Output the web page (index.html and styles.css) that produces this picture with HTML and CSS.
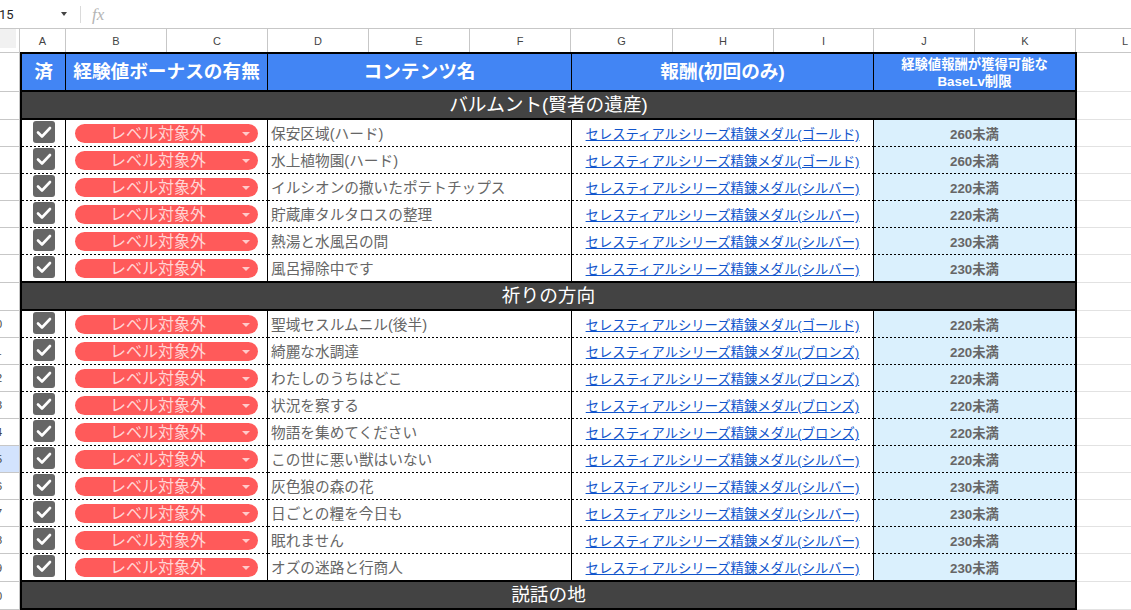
FILE: index.html
```html
<!DOCTYPE html>
<html lang="ja">
<head>
<meta charset="utf-8">
<title>Sheet</title>
<link rel="stylesheet" href="styles.css">
</head>
<body>
<div class="toolbar">
  <div class="namebox"><span class="nb-text">15</span><span class="nb-arrow"></span></div>
  <div class="sep"></div>
  <div class="fx">fx</div>
</div>
<div class="colhead">
  <div class="ch corner"><div class="corner-box"></div></div>
  <div class="ch w-a">A</div>
  <div class="ch w-101">B</div>
  <div class="ch w-101">C</div>
  <div class="ch w-101">D</div>
  <div class="ch w-101">E</div>
  <div class="ch w-101">F</div>
  <div class="ch w-102">G</div>
  <div class="ch w-101">H</div>
  <div class="ch w-100">I</div>
  <div class="ch w-101">J</div>
  <div class="ch w-101">K</div>
  <div class="ch ch-l">L</div>
</div>

<div class="row first r-head">
  <div class="rh"></div>
  <div class="t t-head">
    <div class="h ca">済</div>
    <div class="h cb">経験値ボーナスの有無</div>
    <div class="h cd">コンテンツ名</div>
    <div class="h cg">報酬(初回のみ)</div>
    <div class="h cj small">経験値報酬が獲得可能な<br>BaseLv制限</div>
  </div>
  <div class="l"></div>
</div>

<div class="row r-sec">
  <div class="rh"></div>
  <div class="t t-sec">バルムント(賢者の遺産)</div>
  <div class="l"></div>
</div>

<div class="row r-data">
  <div class="rh"></div>
  <div class="t t-data">
    <div class="c ca"><svg class="cbx" width="22" height="22" viewBox="0 0 22 22"><rect x="0" y="0" width="22" height="22" rx="3" fill="#666"/><path d="M5 11.5 L9 15.5 L17 7" fill="none" stroke="#fff" stroke-width="2.6" stroke-linecap="round" stroke-linejoin="round"/></svg></div>
    <div class="c cb"><div class="chip"><span class="chip-t">レベル対象外</span><span class="chip-a"></span></div></div>
    <div class="c cd">保安区域(ハード)</div>
    <div class="c cg"><a href="#">セレスティアルシリーズ精錬メダル(ゴールド)</a></div>
    <div class="c cj">260未満</div>
  </div>
  <div class="l"></div>
</div>
<div class="row r-data">
  <div class="rh"></div>
  <div class="t t-data">
    <div class="c ca"><svg class="cbx" width="22" height="22" viewBox="0 0 22 22"><rect x="0" y="0" width="22" height="22" rx="3" fill="#666"/><path d="M5 11.5 L9 15.5 L17 7" fill="none" stroke="#fff" stroke-width="2.6" stroke-linecap="round" stroke-linejoin="round"/></svg></div>
    <div class="c cb"><div class="chip"><span class="chip-t">レベル対象外</span><span class="chip-a"></span></div></div>
    <div class="c cd">水上植物園(ハード)</div>
    <div class="c cg"><a href="#">セレスティアルシリーズ精錬メダル(ゴールド)</a></div>
    <div class="c cj">260未満</div>
  </div>
  <div class="l"></div>
</div>
<div class="row r-data">
  <div class="rh"></div>
  <div class="t t-data">
    <div class="c ca"><svg class="cbx" width="22" height="22" viewBox="0 0 22 22"><rect x="0" y="0" width="22" height="22" rx="3" fill="#666"/><path d="M5 11.5 L9 15.5 L17 7" fill="none" stroke="#fff" stroke-width="2.6" stroke-linecap="round" stroke-linejoin="round"/></svg></div>
    <div class="c cb"><div class="chip"><span class="chip-t">レベル対象外</span><span class="chip-a"></span></div></div>
    <div class="c cd">イルシオンの撒いたポテトチップス</div>
    <div class="c cg"><a href="#">セレスティアルシリーズ精錬メダル(シルバー)</a></div>
    <div class="c cj">220未満</div>
  </div>
  <div class="l"></div>
</div>
<div class="row r-data">
  <div class="rh"></div>
  <div class="t t-data">
    <div class="c ca"><svg class="cbx" width="22" height="22" viewBox="0 0 22 22"><rect x="0" y="0" width="22" height="22" rx="3" fill="#666"/><path d="M5 11.5 L9 15.5 L17 7" fill="none" stroke="#fff" stroke-width="2.6" stroke-linecap="round" stroke-linejoin="round"/></svg></div>
    <div class="c cb"><div class="chip"><span class="chip-t">レベル対象外</span><span class="chip-a"></span></div></div>
    <div class="c cd">貯蔵庫タルタロスの整理</div>
    <div class="c cg"><a href="#">セレスティアルシリーズ精錬メダル(シルバー)</a></div>
    <div class="c cj">220未満</div>
  </div>
  <div class="l"></div>
</div>
<div class="row r-data">
  <div class="rh"></div>
  <div class="t t-data">
    <div class="c ca"><svg class="cbx" width="22" height="22" viewBox="0 0 22 22"><rect x="0" y="0" width="22" height="22" rx="3" fill="#666"/><path d="M5 11.5 L9 15.5 L17 7" fill="none" stroke="#fff" stroke-width="2.6" stroke-linecap="round" stroke-linejoin="round"/></svg></div>
    <div class="c cb"><div class="chip"><span class="chip-t">レベル対象外</span><span class="chip-a"></span></div></div>
    <div class="c cd">熱湯と水風呂の間</div>
    <div class="c cg"><a href="#">セレスティアルシリーズ精錬メダル(シルバー)</a></div>
    <div class="c cj">230未満</div>
  </div>
  <div class="l"></div>
</div>
<div class="row r-data r-last">
  <div class="rh"></div>
  <div class="t t-data t-last">
    <div class="c ca"><svg class="cbx" width="22" height="22" viewBox="0 0 22 22"><rect x="0" y="0" width="22" height="22" rx="3" fill="#666"/><path d="M5 11.5 L9 15.5 L17 7" fill="none" stroke="#fff" stroke-width="2.6" stroke-linecap="round" stroke-linejoin="round"/></svg></div>
    <div class="c cb"><div class="chip"><span class="chip-t">レベル対象外</span><span class="chip-a"></span></div></div>
    <div class="c cd">風呂掃除中です</div>
    <div class="c cg"><a href="#">セレスティアルシリーズ精錬メダル(シルバー)</a></div>
    <div class="c cj">230未満</div>
  </div>
  <div class="l"></div>
</div>

<div class="row r-sec">
  <div class="rh"></div>
  <div class="t t-sec">祈りの方向</div>
  <div class="l"></div>
</div>

<div class="row r-data">
  <div class="rh"><div class="num">10</div></div>
  <div class="t t-data">
    <div class="c ca"><svg class="cbx" width="22" height="22" viewBox="0 0 22 22"><rect x="0" y="0" width="22" height="22" rx="3" fill="#666"/><path d="M5 11.5 L9 15.5 L17 7" fill="none" stroke="#fff" stroke-width="2.6" stroke-linecap="round" stroke-linejoin="round"/></svg></div>
    <div class="c cb"><div class="chip"><span class="chip-t">レベル対象外</span><span class="chip-a"></span></div></div>
    <div class="c cd">聖域セスルムニル(後半)</div>
    <div class="c cg"><a href="#">セレスティアルシリーズ精錬メダル(ゴールド)</a></div>
    <div class="c cj">220未満</div>
  </div>
  <div class="l"></div>
</div>
<div class="row r-data">
  <div class="rh"><div class="num">11</div></div>
  <div class="t t-data">
    <div class="c ca"><svg class="cbx" width="22" height="22" viewBox="0 0 22 22"><rect x="0" y="0" width="22" height="22" rx="3" fill="#666"/><path d="M5 11.5 L9 15.5 L17 7" fill="none" stroke="#fff" stroke-width="2.6" stroke-linecap="round" stroke-linejoin="round"/></svg></div>
    <div class="c cb"><div class="chip"><span class="chip-t">レベル対象外</span><span class="chip-a"></span></div></div>
    <div class="c cd">綺麗な水調達</div>
    <div class="c cg"><a href="#">セレスティアルシリーズ精錬メダル(ブロンズ)</a></div>
    <div class="c cj">220未満</div>
  </div>
  <div class="l"></div>
</div>
<div class="row r-data">
  <div class="rh"><div class="num">12</div></div>
  <div class="t t-data">
    <div class="c ca"><svg class="cbx" width="22" height="22" viewBox="0 0 22 22"><rect x="0" y="0" width="22" height="22" rx="3" fill="#666"/><path d="M5 11.5 L9 15.5 L17 7" fill="none" stroke="#fff" stroke-width="2.6" stroke-linecap="round" stroke-linejoin="round"/></svg></div>
    <div class="c cb"><div class="chip"><span class="chip-t">レベル対象外</span><span class="chip-a"></span></div></div>
    <div class="c cd">わたしのうちはどこ</div>
    <div class="c cg"><a href="#">セレスティアルシリーズ精錬メダル(ブロンズ)</a></div>
    <div class="c cj">220未満</div>
  </div>
  <div class="l"></div>
</div>
<div class="row r-data">
  <div class="rh"><div class="num">13</div></div>
  <div class="t t-data">
    <div class="c ca"><svg class="cbx" width="22" height="22" viewBox="0 0 22 22"><rect x="0" y="0" width="22" height="22" rx="3" fill="#666"/><path d="M5 11.5 L9 15.5 L17 7" fill="none" stroke="#fff" stroke-width="2.6" stroke-linecap="round" stroke-linejoin="round"/></svg></div>
    <div class="c cb"><div class="chip"><span class="chip-t">レベル対象外</span><span class="chip-a"></span></div></div>
    <div class="c cd">状況を察する</div>
    <div class="c cg"><a href="#">セレスティアルシリーズ精錬メダル(ブロンズ)</a></div>
    <div class="c cj">220未満</div>
  </div>
  <div class="l"></div>
</div>
<div class="row r-data">
  <div class="rh"><div class="num">14</div></div>
  <div class="t t-data">
    <div class="c ca"><svg class="cbx" width="22" height="22" viewBox="0 0 22 22"><rect x="0" y="0" width="22" height="22" rx="3" fill="#666"/><path d="M5 11.5 L9 15.5 L17 7" fill="none" stroke="#fff" stroke-width="2.6" stroke-linecap="round" stroke-linejoin="round"/></svg></div>
    <div class="c cb"><div class="chip"><span class="chip-t">レベル対象外</span><span class="chip-a"></span></div></div>
    <div class="c cd">物語を集めてください</div>
    <div class="c cg"><a href="#">セレスティアルシリーズ精錬メダル(ブロンズ)</a></div>
    <div class="c cj">220未満</div>
  </div>
  <div class="l"></div>
</div>
<div class="row r-data">
  <div class="rh rh-sel"><div class="num">15</div></div>
  <div class="t t-data">
    <div class="c ca"><svg class="cbx" width="22" height="22" viewBox="0 0 22 22"><rect x="0" y="0" width="22" height="22" rx="3" fill="#666"/><path d="M5 11.5 L9 15.5 L17 7" fill="none" stroke="#fff" stroke-width="2.6" stroke-linecap="round" stroke-linejoin="round"/></svg></div>
    <div class="c cb"><div class="chip"><span class="chip-t">レベル対象外</span><span class="chip-a"></span></div></div>
    <div class="c cd">この世に悪い獣はいない</div>
    <div class="c cg"><a href="#">セレスティアルシリーズ精錬メダル(シルバー)</a></div>
    <div class="c cj">220未満</div>
  </div>
  <div class="l"></div>
</div>
<div class="row r-data">
  <div class="rh"><div class="num">16</div></div>
  <div class="t t-data">
    <div class="c ca"><svg class="cbx" width="22" height="22" viewBox="0 0 22 22"><rect x="0" y="0" width="22" height="22" rx="3" fill="#666"/><path d="M5 11.5 L9 15.5 L17 7" fill="none" stroke="#fff" stroke-width="2.6" stroke-linecap="round" stroke-linejoin="round"/></svg></div>
    <div class="c cb"><div class="chip"><span class="chip-t">レベル対象外</span><span class="chip-a"></span></div></div>
    <div class="c cd">灰色狼の森の花</div>
    <div class="c cg"><a href="#">セレスティアルシリーズ精錬メダル(シルバー)</a></div>
    <div class="c cj">230未満</div>
  </div>
  <div class="l"></div>
</div>
<div class="row r-data">
  <div class="rh"><div class="num">17</div></div>
  <div class="t t-data">
    <div class="c ca"><svg class="cbx" width="22" height="22" viewBox="0 0 22 22"><rect x="0" y="0" width="22" height="22" rx="3" fill="#666"/><path d="M5 11.5 L9 15.5 L17 7" fill="none" stroke="#fff" stroke-width="2.6" stroke-linecap="round" stroke-linejoin="round"/></svg></div>
    <div class="c cb"><div class="chip"><span class="chip-t">レベル対象外</span><span class="chip-a"></span></div></div>
    <div class="c cd">日ごとの糧を今日も</div>
    <div class="c cg"><a href="#">セレスティアルシリーズ精錬メダル(シルバー)</a></div>
    <div class="c cj">230未満</div>
  </div>
  <div class="l"></div>
</div>
<div class="row r-data">
  <div class="rh"><div class="num">18</div></div>
  <div class="t t-data">
    <div class="c ca"><svg class="cbx" width="22" height="22" viewBox="0 0 22 22"><rect x="0" y="0" width="22" height="22" rx="3" fill="#666"/><path d="M5 11.5 L9 15.5 L17 7" fill="none" stroke="#fff" stroke-width="2.6" stroke-linecap="round" stroke-linejoin="round"/></svg></div>
    <div class="c cb"><div class="chip"><span class="chip-t">レベル対象外</span><span class="chip-a"></span></div></div>
    <div class="c cd">眠れません</div>
    <div class="c cg"><a href="#">セレスティアルシリーズ精錬メダル(シルバー)</a></div>
    <div class="c cj">230未満</div>
  </div>
  <div class="l"></div>
</div>
<div class="row r-data r-last">
  <div class="rh"><div class="num">19</div></div>
  <div class="t t-data t-last">
    <div class="c ca"><svg class="cbx" width="22" height="22" viewBox="0 0 22 22"><rect x="0" y="0" width="22" height="22" rx="3" fill="#666"/><path d="M5 11.5 L9 15.5 L17 7" fill="none" stroke="#fff" stroke-width="2.6" stroke-linecap="round" stroke-linejoin="round"/></svg></div>
    <div class="c cb"><div class="chip"><span class="chip-t">レベル対象外</span><span class="chip-a"></span></div></div>
    <div class="c cd">オズの迷路と行商人</div>
    <div class="c cg"><a href="#">セレスティアルシリーズ精錬メダル(シルバー)</a></div>
    <div class="c cj">230未満</div>
  </div>
  <div class="l"></div>
</div>

<div class="row r-sec">
  <div class="rh"><div class="num">20</div></div>
  <div class="t t-sec">説話の地</div>
  <div class="l"></div>
</div>
</body>
</html>
```

FILE: styles.css
```css
* { box-sizing: border-box; }
html, body { margin: 0; padding: 0; }
body {
  width: 1131px;
  height: 610px;
  overflow: hidden;
  background: #fff;
  font-family: "Liberation Sans", "Noto Sans CJK JP", sans-serif;
}

/* toolbar */
.toolbar {
  height: 29px;
  border-bottom: 1px solid #c7c7c7;
  display: flex;
  align-items: center;
}
.namebox {
  width: 80px;
  display: flex;
  align-items: center;
  justify-content: space-between;
  padding-right: 13px;
  font-family: Roboto, "Liberation Sans", sans-serif;
  font-size: 13px;
  color: #1f1f1f;
}
.nb-text { margin-left: -1px; }
.nb-arrow {
  width: 0; height: 0;
  border-left: 3.5px solid transparent;
  border-right: 3.5px solid transparent;
  border-top: 4px solid #444;
}
.sep {
  width: 1px;
  height: 17px;
  background: #dadada;
}
.fx {
  margin-left: 11px;
  font-family: "Liberation Serif", serif;
  font-style: italic;
  font-size: 17px;
  color: #b4b4b4;
  line-height: 1;
}

/* column header */
.colhead {
  height: 23px;
  display: flex;
}
.ch {
  flex: none;
  height: 23px;
  border-right: 1px solid #c7c7c7;
  display: flex;
  align-items: center;
  justify-content: center;
  font-size: 11px;
  color: #444;
}
.corner {
  width: 20px;
  align-items: flex-start;
  justify-content: flex-start;
}
.corner-box { width: 16px; height: 19px; background: #f1f1f1; }
.w-a { width: 46px; }
.w-100 { width: 100px; }
.w-101 { width: 101px; }
.w-102 { width: 102px; }
.ch-l { flex: 1; border-right: none; justify-content: flex-start; padding-left: 46px; }

/* rows */
.row { display: flex; }
.r-head { height: 40px; }
.r-sec { height: 28px; }
.r-data { height: 27px; }
.r-data.r-last { height: 28px; }

.rh {
  flex: none;
  width: 20px;
  border-right: 1px solid #c7c7c7;
  border-bottom: 1px solid #c7c7c7;
  overflow: hidden;
  display: flex;
  align-items: center;
}
.rh-sel { background: #d3e3fd; }
.num {
  flex: none;
  width: 46px;
  margin-left: -27px;
  text-align: center;
  font-size: 11px;
  line-height: 14px;
  color: #444;
}
.l {
  flex: 1;
  border-bottom: 1px solid #e2e2e2;
}
.first .rh, .first .l { border-top: 1px solid #c7c7c7; }

.t {
  flex: none;
  width: 1057px;
  border-left: 2px solid #000;
  border-right: 2px solid #000;
  display: flex;
}
.ca { width: 44px; }
.cb { width: 202px; }
.cd { width: 304px; }
.cg { width: 302px; }
.cj { width: 201px; }

/* header */
.t-head {
  height: 40px;
  border-top: 2px solid #000;
  border-bottom: 2px solid #000;
  background: #4285f4;
}
.h {
  flex: none;
  display: flex;
  align-items: center;
  justify-content: center;
  text-align: center;
  color: #fff;
  font-weight: bold;
  font-size: 18.67px;
  line-height: 22px;
  border-right: 1px solid #000;
}
.h.cj { border-right: none; }
.h.small { font-size: 13.33px; line-height: 17px; padding-top: 1px; }

/* section */
.t-sec {
  background: #434343;
  border-bottom: 2px solid #000;
  color: #fff;
  font-size: 18.67px;
  line-height: 22px;
  align-items: center;
  justify-content: center;
}

/* data */
.c {
  flex: none;
  display: flex;
  align-items: flex-end;
  padding-bottom: 4px;
  border-right: 1px solid #000;
  background-image: repeating-linear-gradient(to right, #000 0 2px, transparent 2px 4px);
  background-size: 100% 1px;
  background-position: left bottom;
  background-repeat: no-repeat;
  line-height: 17px;
}
.c.cj { border-right: none; }
.t-last { border-bottom: 2px solid #000; }
.t-last .c { background-image: none; padding-bottom: 3px; }

.c.ca { justify-content: center; }
.cbx { display: block; }

.c.cb { padding-left: 9px; }
.chip {
  width: 183px;
  height: 19px;
  border-radius: 10px;
  background: #ff5a5a;
  display: flex;
  align-items: center;
  padding: 0 8px;
}
.chip-t {
  flex: 1;
  text-align: center;
  font-size: 16px;
  line-height: 19px;
  color: #ffd4d4;
}
.chip-a {
  flex: none;
  margin-left: 9px;
  width: 0; height: 0;
  border-left: 4px solid transparent;
  border-right: 4px solid transparent;
  border-top: 4px solid #ffcaca;
}

.c.cd {
  padding-left: 3px;
  font-size: 14.67px;
  color: #666;
}
.c.cg { justify-content: center; font-size: 13.33px; }
.c.cg a { color: #1155cc; text-decoration: underline; }
.c.cj {
  justify-content: center;
  background-color: #daf0fd;
  font-size: 13.33px;
  font-weight: bold;
  color: #666;
}
```
